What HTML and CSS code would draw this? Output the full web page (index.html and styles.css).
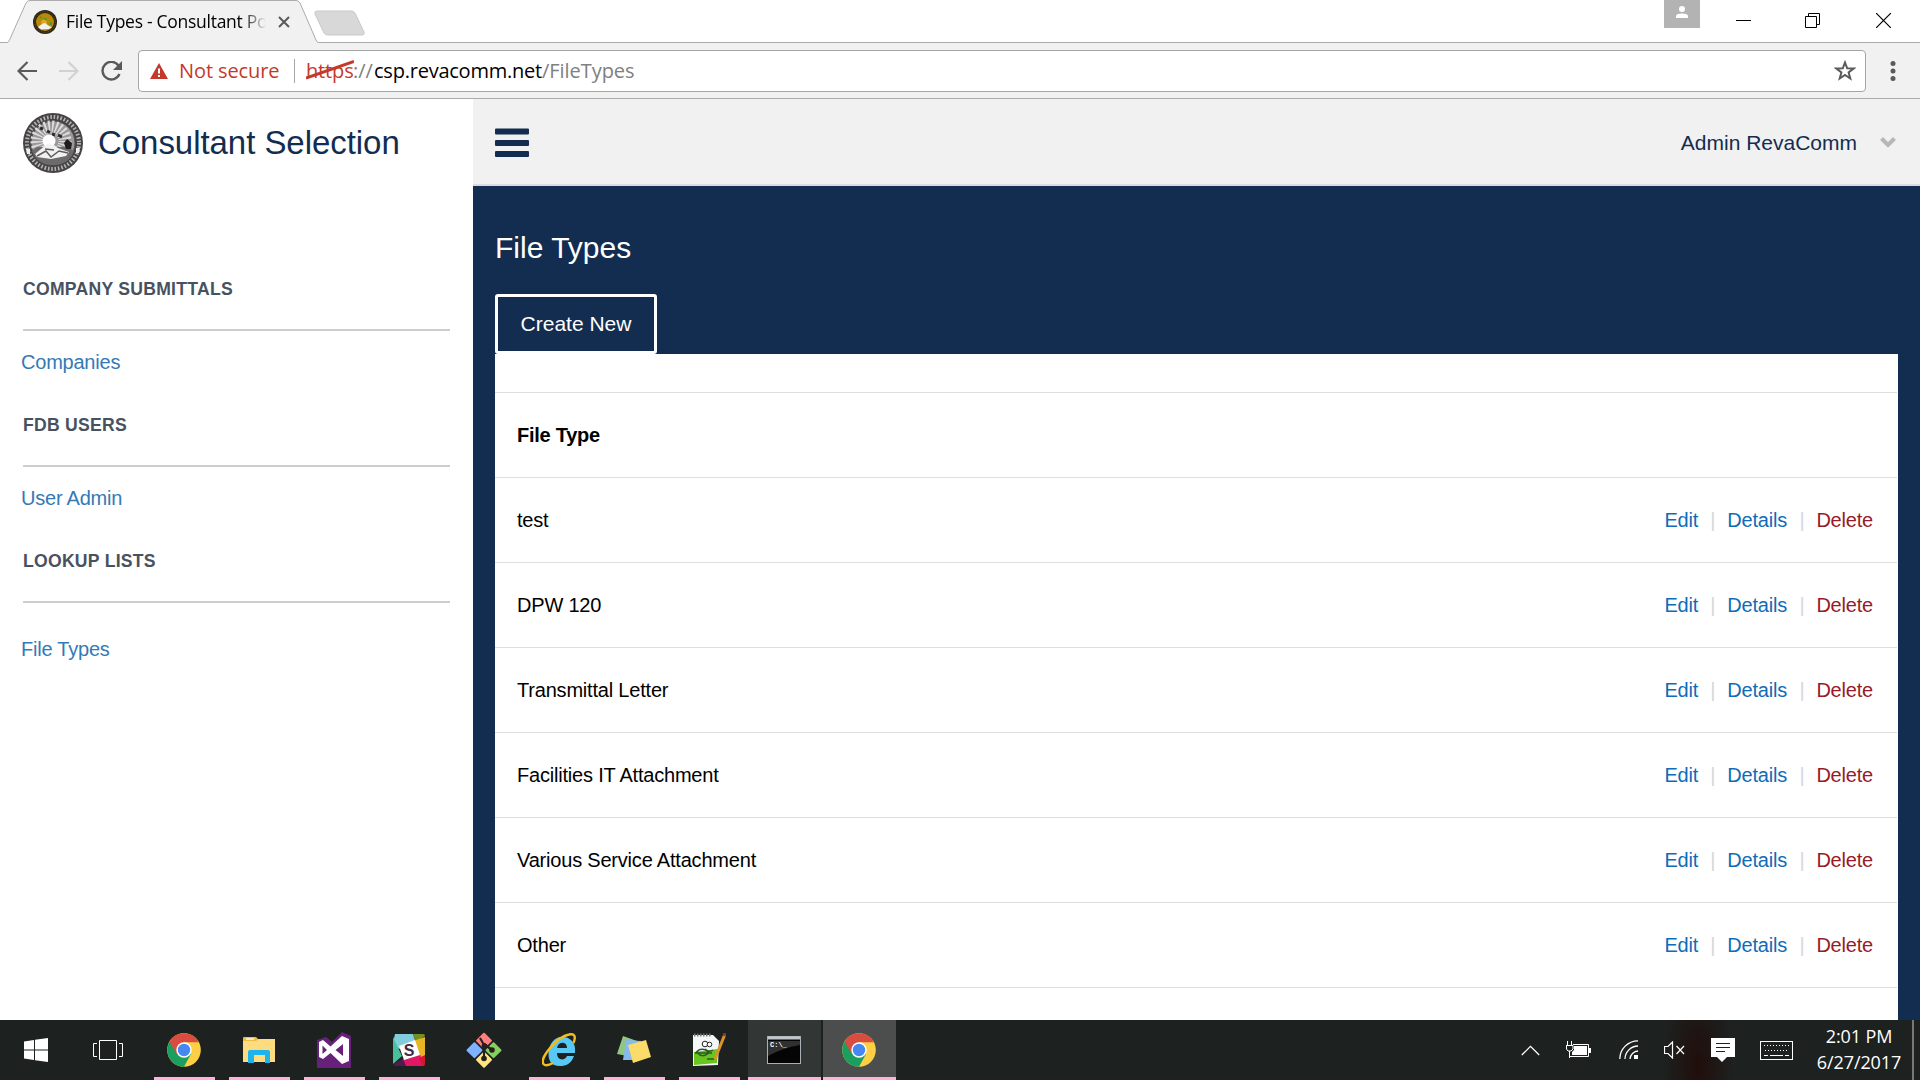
FILE: index.html
```html
<!DOCTYPE html>
<html lang="en">
<head>
<meta charset="utf-8">
<title>File Types - Consultant Portal</title>
<link rel="stylesheet" href="styles.css">
</head>
<body>
<svg width="0" height="0" class="defs">
  <defs>
    <symbol id="chrome" viewBox="0 0 34 34">
      <circle cx="17" cy="17" r="16.8" fill="#fecf45"/>
      <path d="M17 17L2.500 8.600A16.800 16.800 0 0 0 17 33.800L24 21Z" fill="#1a9f5e"/>
      <path d="M2.500 8.600A16.800 16.800 0 0 1 32 9.200H17L9.800 21.200Z" fill="#da4c3f"/>
      <circle cx="17" cy="17" r="7.700" fill="#fff"/>
      <circle cx="17" cy="17" r="6.200" fill="#4688f1"/>
    </symbol>
  </defs>
</svg>
<div class="screen">
  <header class="tabstrip">
    <div class="tab">
      <svg class="tab-shape" width="320" height="43" viewBox="0 0 320 43"><path d="M0 43V42.500H7Q8.500 42.500 9.500 40L26 3Q27.500 .5 30 .5H296Q298.500 .5 300 3L316 40Q317 42.500 318.500 42.500H320V43Z" fill="#f1f1f1"/><path d="M0 42.500H7Q8.500 42.500 9.500 40L26 3Q27.500 .5 30 .5H296Q298.500 .5 300 3L316 40Q317 42.500 318.500 42.500H320" fill="none" stroke="#ababab"/></svg>
      <svg class="favicon" width="24" height="24" viewBox="0 0 24 24"><circle cx="12" cy="12" r="12" fill="#2b2517"/><circle cx="12" cy="12" r="10.300" fill="none" stroke="#6b5418" stroke-dasharray="1.200 1.200"/><circle cx="12" cy="12" r="9" fill="#b98a08"/><path d="M7 7l2 1M11 8.500l3 1" stroke="#449b35" stroke-width="1.600"/><path d="M17 11.500l2.500 1.500-1 2.500-2-1z" fill="#449b35"/><circle cx="11" cy="12.500" r="2.800" fill="#e0a824"/><path d="M5 17l4-3 3-1 4 3 3 1-3 2-8 .5z" fill="#f2f2ee"/></svg>
      <span class="tab-title">File Types - Consultant Po</span>
      <svg class="tab-close" width="12" height="12" viewBox="0 0 12 12"><path d="M1 1L11 11M11 1L1 11" stroke="#5a5a5a" stroke-width="2"/></svg>
    </div>
    <svg class="newtab" width="52" height="26" viewBox="0 0 52 26"><path d="M3 1H37Q40 1 41 3L50 22Q51 25 48 25H14Q11 25 10 23L1 4Q0 1 3 1Z" fill="#d8d8d8" stroke="#c9c9c9"/></svg>
    <div class="window-controls">
      <span class="profile"><svg width="12" height="12" viewBox="0 0 12 12"><circle cx="6" cy="3" r="3" fill="#fff"/><path d="M0 12V10Q0 7.500 6 7.500T12 10V12Z" fill="#fff"/></svg></span>
      <svg class="minimize" width="15" height="15" viewBox="0 0 15 15"><path d="M0 7.500H15" stroke="#000"/></svg>
      <svg class="restore" width="15" height="15" viewBox="0 0 15 15"><path d="M.5 3.500H11.500V14.500H.5ZM3.500 3.500V.5H14.500V11.500H11.500" stroke="#000" fill="none"/></svg>
      <svg class="close" width="15" height="15" viewBox="0 0 15 15"><path d="M0 0L15 15M15 0L0 15" stroke="#000" stroke-width="1.200"/></svg>
    </div>
  </header>
  <div class="toolbar">
    <svg class="back" width="20" height="20" viewBox="0 0 20 20"><path d="M20 10H2M10.500 1L1.500 10L10.500 19" fill="none" stroke="#5a5a5a" stroke-width="2.200"/></svg>
    <svg class="forward" width="20" height="20" viewBox="0 0 20 20"><path d="M0 10H18M9.500 1L18.500 10L9.500 19" fill="none" stroke="#d2d2d2" stroke-width="2.200"/></svg>
    <svg class="reload" width="22" height="20" viewBox="0 0 22 20"><path d="M17.500 4.500A8.800 8.800 0 1 0 18.500 13" fill="none" stroke="#5a5a5a" stroke-width="2.400"/><path d="M21 0V9H12Z" fill="#5a5a5a"/></svg>
    <div class="omnibox">
      <svg class="warning" width="18" height="16" viewBox="0 0 18 16"><path d="M9 0L18 16H0Z" fill="#c5392b"/><path d="M9 5.500V10.500M9 12V14" stroke="#fff" stroke-width="2"/></svg>
      <span class="insecure">Not secure</span>
      <span class="divider"></span>
      <span class="scheme">https<svg width="48" height="20" viewBox="0 0 48 20"><path d="M0 18L48 1.500" stroke="#c5392b" stroke-width="3"/></svg></span><span class="slashes">://</span><span class="host">csp.revacomm.net</span><span class="path">/FileTypes</span>
      <svg class="star" width="22" height="21" viewBox="0 0 22 21"><path d="M11 2.500L13.200 8.300L19.600 8.500L14.600 12.400L16.300 18.500L11 15L5.700 18.500L7.400 12.400L2.400 8.500L8.800 8.300Z" fill="none" stroke="#5a5a5a" stroke-width="2"/></svg>
    </div>
    <svg class="menu" width="6" height="20" viewBox="0 0 6 20"><g fill="#5a5a5a"><circle cx="3" cy="2.500" r="2.500"/><circle cx="3" cy="10" r="2.500"/><circle cx="3" cy="17.500" r="2.500"/></g></svg>
  </div>
  <div class="page">
    <aside class="sidebar">
      <div class="brand">
        <svg width="60" height="60" viewBox="0 0 60 60">
          <circle cx="30" cy="30" r="30" fill="#454344"/>
          <circle cx="30" cy="30" r="26" fill="none" stroke="#b5b3b4" stroke-width="4" stroke-dasharray="1.600 1.800"/>
          <circle cx="30" cy="30" r="22" fill="#9a9899" stroke="#555" stroke-width="1"/>
          <circle cx="28" cy="28" r="14" fill="none" stroke="#dedddd" stroke-width="13" stroke-dasharray="1.600 1.900"/>
          <path d="M9 38Q14 52 30 52Q46 52 51 38L44 34H14Z" fill="#6c6a6b"/>
          <path d="M17 15l3 1M24 18l3 1.500M29 21l3 1M35 22l4 2" stroke="#2c2a2b" stroke-width="3"/>
          <circle cx="26" cy="28" r="6.500" fill="#fff"/>
          <path d="M12 41L24 31L31 32L35 35L46 39L43 43L28 46L14 44Z" fill="#f1f1f1"/>
          <path d="M14 43l9-5 5 6 8-6 9 2M22 36l9 1" stroke="#5d5b5c" stroke-width="1.500" fill="none"/>
          <path d="M44 26l5 4-1 6-5 0-2-6z" fill="#201f20"/>
          <path d="M3 36h4v5H4zM53 35h4l-1 5h-3z" fill="#eee"/>
        </svg>
        <span>Consultant Selection</span>
      </div>
      <nav>
        <section class="group"><h2>COMPANY SUBMITTALS</h2><a>Companies</a></section>
        <section class="group"><h2>FDB USERS</h2><a>User Admin</a></section>
        <section class="group last"><h2>LOOKUP LISTS</h2><a>File Types</a></section>
      </nav>
    </aside>
    <main class="main">
      <div class="topbar">
        <svg width="34" height="30" viewBox="0 0 34 30"><g fill="#132d50"><rect y=".5" width="34" height="6" rx="1"/><rect y="12" width="34" height="6" rx="1"/><rect y="23" width="34" height="6" rx="1"/></g></svg>
        <span class="user">Admin RevaComm</span>
        <svg width="16" height="11" viewBox="0 0 16 11"><path d="M1.500 1.500L8 8L14.500 1.500" fill="none" stroke="#b4b7bc" stroke-width="4"/></svg>
      </div>
      <div class="content">
        <h1>File Types</h1>
        <a class="create">Create New</a>
        <div class="panel">
          <div class="row head"><span>File Type</span></div>
          <div class="row"><span>test</span><div class="actions"><a>Edit</a><i>|</i><a>Details</a><i>|</i><a class="delete">Delete</a></div></div>
          <div class="row"><span>DPW 120</span><div class="actions"><a>Edit</a><i>|</i><a>Details</a><i>|</i><a class="delete">Delete</a></div></div>
          <div class="row"><span>Transmittal Letter</span><div class="actions"><a>Edit</a><i>|</i><a>Details</a><i>|</i><a class="delete">Delete</a></div></div>
          <div class="row"><span>Facilities IT Attachment</span><div class="actions"><a>Edit</a><i>|</i><a>Details</a><i>|</i><a class="delete">Delete</a></div></div>
          <div class="row"><span>Various Service Attachment</span><div class="actions"><a>Edit</a><i>|</i><a>Details</a><i>|</i><a class="delete">Delete</a></div></div>
          <div class="row"><span>Other</span><div class="actions"><a>Edit</a><i>|</i><a>Details</a><i>|</i><a class="delete">Delete</a></div></div>
          <div class="row"></div>
        </div>
      </div>
    </main>
  </div>
  <footer class="taskbar">
    <div class="sys"><svg width="24" height="24" viewBox="0 0 24 24"><path d="M0 3.500L10 2V11.500H0ZM11 1.800L24 0V11.500H11ZM0 12.500H10V22L0 20.500ZM11 12.500H24V24L11 22.200Z" fill="#fff"/></svg></div>
    <div class="sys"><svg width="30" height="20" viewBox="0 0 30 20"><path d="M6.500 .5H23.500V19.500H6.500ZM4 3.500H.5V16.500H4M26 3.500H29.500V16.500H26" fill="none" stroke="#fff"/></svg></div>
    <div class="apps">
      <div class="app running"><svg width="34" height="34"><use href="#chrome"/></svg></div>
      <div class="app running"><svg width="32" height="28" viewBox="0 0 32 28"><path d="M0 2Q0 1 1 1H13L15 3H31Q32 3 32 4V26H0Z" fill="#f0bd45"/><path d="M0 5H13L16 3H32V26H0Z" fill="#fddc80"/><path d="M3 3H11" stroke="#fff" stroke-width="1.300"/><path d="M5 27V16Q5 14 7 14H25Q27 14 27 16V27H22V19H11V27Z" fill="#1cb4ee"/></svg></div>
      <div class="app running"><svg width="34" height="36" viewBox="0 0 34 36"><path d="M0 8L9 5L15 10L25 0L34 4V36H0Z" fill="#68217a"/><path d="M2 10L6 8L13.500 14.500L25 4L32 7V29L25 32L13.500 21L6 27L2 25ZM5.500 13.500V22L10 18ZM18.500 18L26 24V12Z" fill="#fff" fill-rule="evenodd"/></svg></div>
      <div class="app running"><svg width="32" height="32" viewBox="0 0 32 32"><path d="M2 0H20L23 9L6 15L0 9Z" fill="#82cddd"/><path d="M20 0H30Q32 0 32 2L23 8Z" fill="#72901d"/><path d="M32 3V22L26 24L20 7Z" fill="#e8b525"/><path d="M0 3L9 22L0 30Z" fill="#47c19b"/><path d="M0 30L11 24L13 32H2Z" fill="#501b4f"/><path d="M10 25L27 20L31 32H13Z" fill="#e01765"/><path d="M26 24L32 21V30Q32 32 30 32Z" fill="#d2182b"/><path d="M6 12L22 6L27 21L11 26Z" fill="#fff"/><text x="16" y="22" text-anchor="middle" class="slack-letter">S</text></svg></div>
      <div class="app"><svg width="36" height="36" viewBox="0 0 36 36"><g transform="translate(18 18) rotate(45)"><rect x="-12.500" y="-12.500" width="11.800" height="11.800" rx="1" fill="#ff7f7f"/><rect x="1" y="-12.500" width="11.800" height="11.800" rx="1" fill="#85d05a"/><rect x="-12.500" y="1" width="11.800" height="11.800" rx="1" fill="#80b3ff"/><rect x="1" y="1" width="11.800" height="11.800" rx="1" fill="#ffe680"/></g><path d="M14 6L18 13V27M18 12L26 18" stroke="#241f20" stroke-width="2.200" fill="none"/><g fill="#241f20"><circle cx="18.500" cy="14" r="2.800"/><circle cx="18" cy="26.500" r="2.800"/><circle cx="26" cy="18" r="2.800"/></g></svg></div>
      <div class="app running"><svg width="34" height="34" viewBox="0 0 34 34"><path d="M33 20H15C15 28 23 28 25 23H32C29 31 24 33 18 33C9 33 5 27 7 16C10 5 18 3 22 4C30 5 34 11 33 20ZM15 15H25C25 8 16 8 15 15Z" fill="#58c9f5" fill-rule="evenodd"/><path d="M31.500 10C34 4 33 0 27 1.500C15 4-3 25 1.500 31Q4 34 11 30" fill="none" stroke="#f3bd20" stroke-width="2.400"/></svg></div>
      <div class="app running"><svg width="34" height="28" viewBox="0 0 34 28"><path d="M6 0L20 5L16 21L0 18Z" fill="#91c682"/><path d="M9 4L24 5V24H6Z" fill="#86b9ec"/><path d="M11 9L29 4L34 21L16 27Z" fill="#fbdb69"/></svg></div>
      <div class="app running"><svg width="34" height="34" viewBox="0 0 34 34"><path d="M1 2H21L27 8L26 32L1 33Z" fill="#f4f7f7"/><path d="M2 19L26 16L25 30L2 32Z" fill="#68c51f"/><path d="M2 2H20" stroke="#777" stroke-width="3" stroke-dasharray="1.500 1.500"/><path d="M4 20C7 15 13 15 17 20C12 24 8 23 6 20M3 20H20M13 16Q17 20 21 17M15 26H22" fill="none" stroke="#285b24" stroke-width="1.500"/><circle cx="13" cy="11" r="2.800" fill="#fff" stroke="#222"/><circle cx="17.500" cy="11.500" r="2.300" fill="#fff" stroke="#222"/><path d="M33 1L23 26" stroke="#da9425" stroke-width="3"/><path d="M33 0L32 3" stroke="#983126" stroke-width="3"/></svg></div>
      <div class="app open"><svg width="34" height="28" viewBox="0 0 34 28"><rect x=".5" y=".5" width="33" height="27" fill="#050505" stroke="#a8b1b5"/><path d="M1 2H33" stroke="#c0c7ca" stroke-width="3"/><path d="M1 5H33V9Q15 12 1 20Z" fill="#303030"/><text x="3" y="11" class="prompt">C:\_</text></svg></div>
      <div class="app open active"><svg width="34" height="34"><use href="#chrome"/></svg></div>
    </div>
    <div class="tray">
      <svg class="t-up" width="19" height="11" viewBox="0 0 19 11"><path d="M.8 10L9.500 1.300L18.200 10" fill="none" stroke="#fff" stroke-width="1.300"/></svg>
      <svg class="t-bat" width="25" height="18" viewBox="0 0 25 18"><path d="M7 3.500H22.500V15.500H4M3.500 17V10M1.500 0V4M5.500 0V4M0 4.500H7V8L5 10H2L.5 8V4" fill="none" stroke="#fff"/><path d="M8 5H21V14H6V11L8 9Z" fill="#fff"/><path d="M23 7H25V12H23Z" fill="#fff"/></svg>
      <svg class="t-wifi" width="20" height="20" viewBox="0 0 20 20"><g fill="none" stroke="#fff" stroke-width="1.300"><path d="M.8 19C.8 9 9 .8 19 .8M6 19C6 12 12 6 19 6M11 19C11 15 15 11 19 11"/></g><rect x="15" y="15" width="4" height="4" fill="#fff"/></svg>
      <svg class="t-vol" width="21" height="18" viewBox="0 0 21 18"><path d="M.5 5.500H4L8.500 1V17L4 12.500H.5ZM12.500 5L20 13M20 5L12.500 13" fill="none" stroke="#fff" stroke-width="1.200"/></svg>
      <svg class="t-msg" width="24" height="24" viewBox="0 0 24 24"><path d="M0 0H24V19H16L11 24L6 19H0Z" fill="#fff"/><path d="M5 5.500H19M5 9.500H19M5 13.500H14" stroke="#1c201f"/></svg>
      <svg class="t-kbd" width="33" height="19" viewBox="0 0 33 19"><rect x=".5" y=".5" width="32" height="18" fill="none" stroke="#fff"/><path d="M4 4.500H29M5 9.500H29" stroke="#fff" stroke-dasharray="1 2"/><path d="M4 14.500H8M10 14.500H23M25 14.500H29" stroke="#fff"/></svg>
      <div class="clock"><div>2:01 PM</div><div>6/27/2017</div></div>
      <span class="peek"></span>
    </div>
  </footer>
</div>
</body>
</html>
```

FILE: styles.css
```css
* { box-sizing: border-box; }
body { margin: 0; font-family: "Liberation Sans", Arial, sans-serif; }
svg { display: block; flex: none; }
.defs { position: absolute; }
.screen { width: 1920px; height: 1080px; display: flex; flex-direction: column; overflow: hidden; background: #fff; }

/* Browser chrome */
.tabstrip { flex: none; height: 43px; display: flex; background: linear-gradient(#ababab, #ababab) bottom / 100% 1px no-repeat #fff; font-family: "Open Sans", "Noto Sans", sans-serif; }
.tab { position: relative; width: 320px; height: 43px; display: flex; align-items: center; padding-left: 33px; }
.tab-shape { position: absolute; left: 0; top: 0; }
.favicon, .tab-title, .tab-close { position: relative; }
.tab-title { margin-left: 9px; width: 204px; white-space: nowrap; font-size: 17.5px; letter-spacing: -0.28px; line-height: 40px; top: -1px; -webkit-mask-image: linear-gradient(90deg, #000 176px, transparent 200px); }
.tab-close { margin-left: 8px; }
.newtab { margin: 10px 0 0 -6px; position: relative; }
.window-controls { margin-left: auto; display: flex; padding-right: 29px; }
.profile { width: 36px; height: 28px; background: #b3b3b3; display: flex; justify-content: center; padding-top: 6px; }
.minimize { margin: 13px 0 0 36px; }
.restore { margin: 13px 0 0 54px; }
.close { margin: 13px 0 0 56px; }
.toolbar { flex: none; height: 56px; display: flex; align-items: center; background: #f1f1f1; border-bottom: 1px solid #ababab; padding-left: 17px; font-family: "Open Sans", "Noto Sans", sans-serif; }
.forward { margin-left: 22px; }
.reload { margin-left: 22px; }
.omnibox { width: 1728px; height: 42px; margin-left: 15px; border: 1px solid #a6a6a6; border-radius: 4px; background: #fff; display: flex; align-items: center; padding: 0 9px 0 11px; font-size: 20px; line-height: 40px; white-space: nowrap; }
.insecure { color: #c5392b; margin-left: 11px; width: 100px; letter-spacing: -0.1px; }
.divider { width: 1px; height: 24px; background: #a6a6a6; margin: 0 11px 0 15px; }
.scheme { position: relative; color: #c5392b; width: 47px; letter-spacing: -0.15px; }
.scheme svg { position: absolute; left: 0; top: 9px; }
.slashes { color: #808080; width: 21px; }
.host { width: 168px; letter-spacing: -0.23px; color: #000; }
.path { color: #808080; letter-spacing: -0.05px; }
.star { margin-left: auto; }
.menu { margin-left: 24px; }

/* Application */
.page { flex: 1; min-height: 0; display: flex; overflow: hidden; }
.sidebar { flex: none; width: 473px; background: #fff; padding: 14px 23px 0; }
.brand { display: flex; align-items: center; height: 60px; gap: 15px; color: #132d50; font-size: 33px; letter-spacing: -0.05px; line-height: 60px; white-space: nowrap; }
nav { padding-top: 105px; }
.group { height: 136px; }
.group h2 { margin: 0; height: 53px; border-bottom: 2px solid #cbcdcf; font-size: 17.6px; line-height: 22px; letter-spacing: 0.26px; color: #48525f; }
.group a { display: block; margin: 19px 0 0 -2px; font-size: 20px; line-height: 24px; letter-spacing: -0.22px; color: #337ab7; }
.group.last a { margin-top: 34px; }
.main { flex: 1; display: flex; flex-direction: column; min-width: 0; }
.topbar { flex: none; height: 87px; background: #f1f1f1; border-bottom: 2px solid #dcdcde; display: flex; align-items: center; padding: 2px 24px 0 22px; }
.user { margin: 0 23px 0 auto; font-size: 21px; color: #132d50; }
.content { flex: 1; background: #132d50; padding: 42px 22px 0; display: flex; flex-direction: column; align-items: flex-start; }
h1 { margin: 0; color: #fff; font-weight: 400; font-size: 30px; line-height: 40px; height: 66px; }
.create { width: 162px; height: 60px; border: 3px solid #fff; border-radius: 3px; color: #fff; font-size: 21px; line-height: 54px; text-align: center; }
.panel { align-self: stretch; flex: none; background: #fff; padding: 38px 1px 0 0; }
.row { height: 85px; border-top: 1px solid #ddd; display: flex; align-items: center; justify-content: space-between; padding: 0 24px 0 22px; font-size: 20px; letter-spacing: -0.2px; color: #000; }
.head { font-weight: 700; letter-spacing: -0.25px; }
.actions { display: flex; }
.actions a { color: #0f6cb9; }
.actions i { font-style: normal; color: #d5d7dc; margin: 0 12px 0 12.3px; }
.actions .delete { color: #981b28; }

/* Desktop taskbar */
.taskbar { flex: none; height: 60px; display: flex; background: radial-gradient(ellipse 35px 90px at 1698px 45px, #200e0b, transparent) #1d2120; color: #fff; }
.sys { width: 72px; display: flex; align-items: center; justify-content: center; }
.apps { display: flex; margin-left: 2px; }
.app { position: relative; width: 75px; display: flex; align-items: center; justify-content: center; }
.running::after { content: ""; position: absolute; left: 8px; bottom: 0; width: 61px; height: 3px; background: #ffb0df; }
.open { width: 73px; margin: 0 0 0 2px; background: #323635; border-bottom: 3px solid #ffb0df; padding: 3px 2px 0 0; }
.open.active { background: #4b4e4d; padding-right: 1px; }
.slack-letter { font: 700 16px "Liberation Sans", sans-serif; fill: #402b45; }
.prompt { font: 700 7px "Liberation Mono", monospace; fill: #fff; }
.tray { margin-left: auto; display: flex; align-items: center; }
.t-bat { margin-left: 26px; }
.t-wifi { margin-left: 28px; }
.t-vol { margin-left: 25px; }
.t-msg { margin-left: 26px; }
.t-kbd { margin-left: 25px; }
.clock { width: 98px; margin: 0 4px 0 17px; text-align: center; font: 18px/26px "Open Sans", "Noto Sans", sans-serif; letter-spacing: -0.1px; position: relative; top: -1px; }
.peek { width: 2px; height: 60px; background: #777; margin-right: 6px; }
```
